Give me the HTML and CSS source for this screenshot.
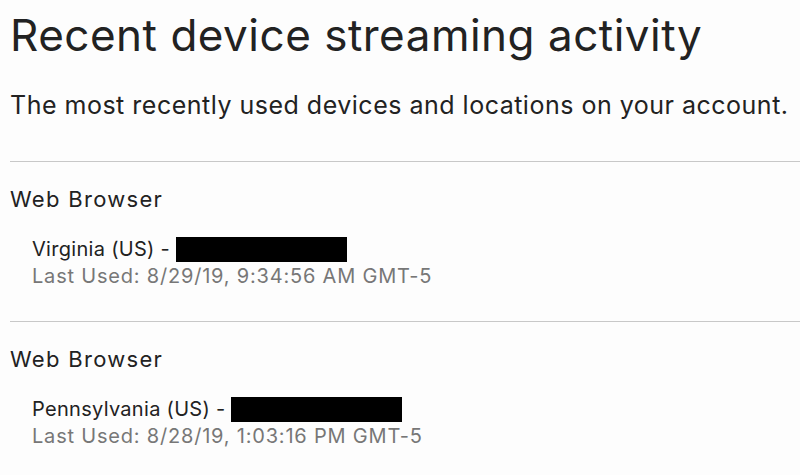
FILE: index.html
```html
<!DOCTYPE html>
<html>
<head>
<meta charset="utf-8">
<link rel="stylesheet" href="styles.css">
</head>
<body>
<div class="page">
  <h1 class="title">Recent device streaming activity</h1>
  <p class="subtitle">The most recently used devices and locations on your account.</p>
  <div class="device">
    <div class="device-name">Web Browser</div>
    <div class="device-info">
      <div class="location">Virginia (US) - <span class="redact"></span></div>
      <div class="last-used">Last Used: 8/29/19, 9:34:56 AM GMT-5</div>
    </div>
  </div>
  <div class="device">
    <div class="device-name">Web Browser</div>
    <div class="device-info">
      <div class="location">Pennsylvania (US) - <span class="redact"></span></div>
      <div class="last-used">Last Used: 8/28/19, 1:03:16 PM GMT-5</div>
    </div>
  </div>
</div>
</body>
</html>
```
FILE: styles.css
```css
html, body {
  margin: 0;
  padding: 0;
  background: #fdfdfd;
}
body {
  font-family: Inter, "Liberation Sans", sans-serif;
  color: #222;
  width: 800px;
  height: 475px;
  overflow: hidden;
}
.page {
  padding-left: 10px;
}
.title {
  margin: 0;
  padding-top: 8px;
  font-size: 44px;
  font-weight: 400;
  line-height: 54px;
  letter-spacing: 0.5px;
}
.subtitle {
  margin: 28px 0 0;
  font-size: 25px;
  line-height: 30px;
  letter-spacing: 0.5px;
}
.device {
  border-top: 1px solid #c8c8c8;
  margin-top: 41px;
  padding-top: 23px;
  height: 136px;
}
.device + .device {
  margin-top: 0;
}
.device-name {
  font-size: 22px;
  line-height: 28px;
  letter-spacing: 1.3px;
}
.device-info {
  padding-left: 22px;
  margin-top: 23px;
}
.location {
  font-size: 20px;
  line-height: 27px;
  display: flex;
  align-items: center;
  letter-spacing: 0.3px;
  white-space: pre;
}
.redact {
  display: inline-block;
  width: 171px;
  height: 25px;
  background: #000;
  margin-left: 0;
}
.last-used {
  font-size: 20px;
  line-height: 27px;
  color: #777;
  letter-spacing: 0.8px;
}
```
